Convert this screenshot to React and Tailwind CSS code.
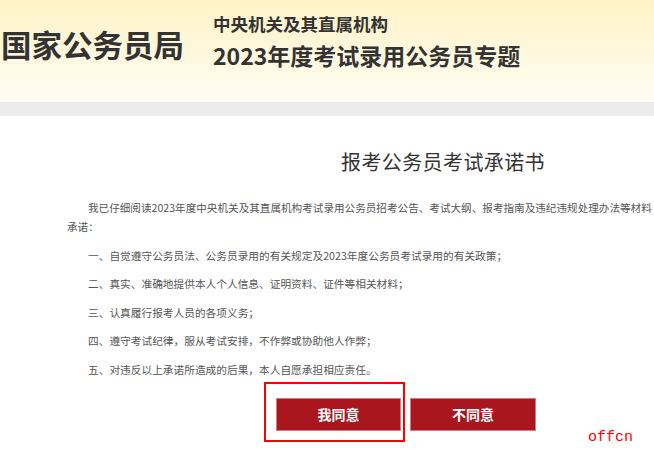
import React from 'react'

const items = [
  '一、自觉遵守公务员法、公务员录用的有关规定及2023年度公务员考试录用的有关政策；',
  '二、真实、准确地提供本人个人信息、证明资料、证件等相关材料；',
  '三、认真履行报考人员的各项义务；',
  '四、遵守考试纪律，服从考试安排，不作弊或协助他人作弊；',
  '五、对违反以上承诺所造成的后果，本人自愿承担相应责任。',
]

export default function App() {
  return (
    <div className="relative w-[654px] h-[450px] overflow-hidden bg-white font-['Noto_Sans_CJK_SC',sans-serif]">
      {/* Banner */}
      <header className="h-[102px] flex items-start bg-linear-to-b from-[#fff2c6] to-[#fffdf3] text-[#333]">
        <div className="w-[213px] pt-[24px] pl-[1px] text-[30.5px] leading-[40px] font-bold whitespace-nowrap">
          国家公务员局
        </div>
        <div className="pt-[10px] whitespace-nowrap">
          <div className="text-[17.5px] leading-[28px] font-bold">中央机关及其直属机构</div>
          <div className="text-[23px] leading-[34px] font-bold">2023年度考试录用公务员专题</div>
        </div>
      </header>
      <div className="h-[14px] bg-[#ececec]" />

      {/* Letter */}
      <main className="pl-[67px] text-[#555]">
        <h1 className="pl-[274px] mt-[31px] text-[20px] leading-[30px] font-normal text-[#333] tracking-[0.4px] whitespace-nowrap">
          报考公务员考试承诺书
        </h1>
        <p className="mt-[21px] text-[10.6px] leading-[19px] whitespace-nowrap">
          <span className="pl-[21px]">我已仔细阅读2023年度中央机关及其直属机构考试录用公务员招考公告、考试大纲、报考指南及违纪违规处理办法等材料</span>
          <br />
          承诺：
        </p>
        {items.map((t) => (
          <p key={t} className="mt-[9.5px] pl-[21px] text-[10.7px] leading-[19px] whitespace-nowrap">
            {t}
          </p>
        ))}

        <div className="mt-[19.5px] pl-[209px] flex gap-[9px]">
          <button className="relative w-[125px] h-[33px] bg-[#a9161e] border border-[#cf7e83] text-white text-[14px] font-bold">
            我同意
            <span className="absolute -left-[13px] -top-[17px] -right-[5px] -bottom-[12px] border-2 border-[#ff0000] pointer-events-none" />
          </button>
          <button className="w-[126px] h-[33px] bg-[#a9161e] border border-[#cf7e83] text-white text-[14px] font-bold">
            不同意
          </button>
        </div>
      </main>

      <span className="absolute left-[588px] top-[428px] text-[15px] leading-[20px] text-[#ff0000] font-['Liberation_Mono',monospace]">
        offcn
      </span>
    </div>
  )
}
